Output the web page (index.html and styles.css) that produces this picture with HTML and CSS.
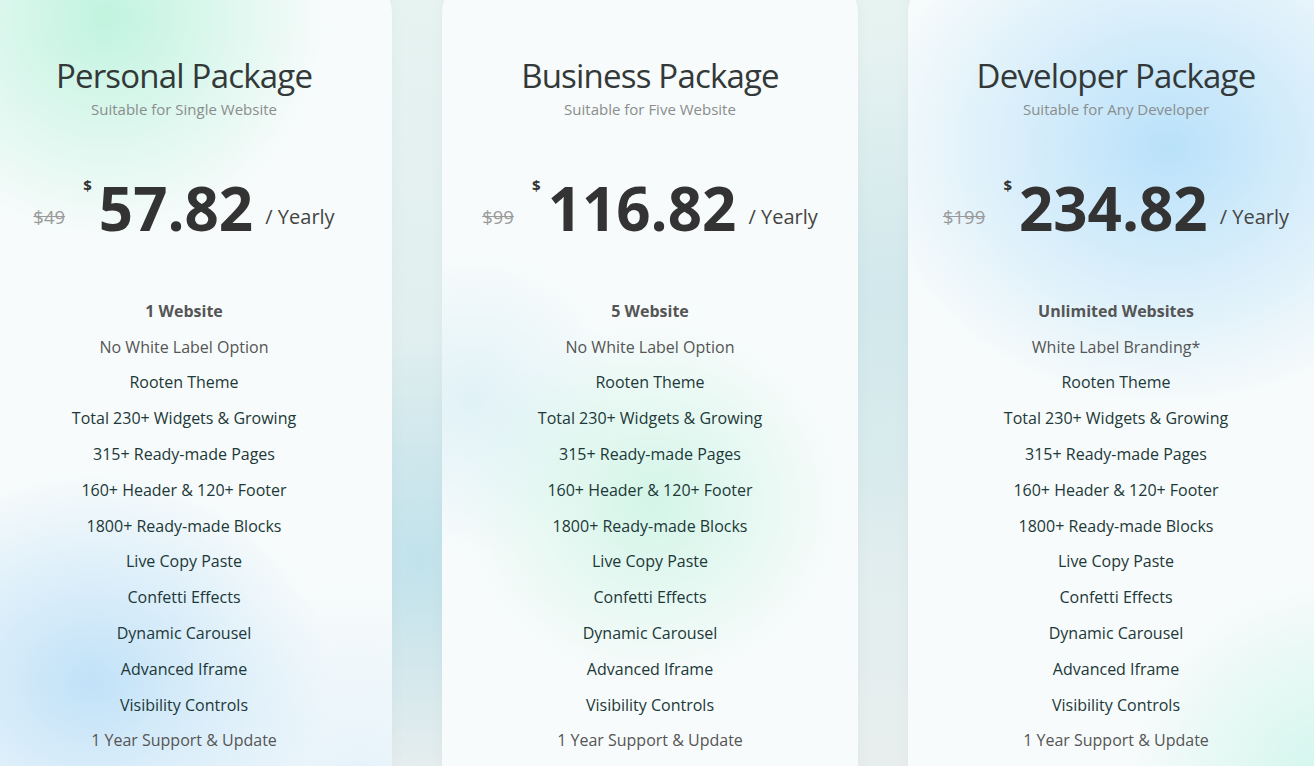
FILE: index.html
```html
<!DOCTYPE html>
<html lang="en">
<head>
    <meta charset="UTF-8">
    <meta name="viewport" content="width=device-width, initial-scale=1.0">
    <title>Pricing</title>
    <link rel="stylesheet" href="styles.css">
</head>
<body>
    <div class="pricing">
        <div class="card card-personal">
            <div class="card-head">
                <h2 class="title">Personal Package</h2>
                <p class="subtitle">Suitable for Single Website</p>
            </div>
            <div class="price">
                <span class="old">$49</span>
                <span class="amount"><sup>$</sup>57.82</span>
                <span class="period">/ Yearly</span>
            </div>
            <ul class="features">
                <li class="strong">1 Website</li>
                <li class="muted">No White Label Option</li>
                <li>Rooten Theme</li>
                <li>Total 230+ Widgets &amp; Growing</li>
                <li>315+ Ready-made Pages</li>
                <li>160+ Header &amp; 120+ Footer</li>
                <li>1800+ Ready-made Blocks</li>
                <li>Live Copy Paste</li>
                <li>Confetti Effects</li>
                <li>Dynamic Carousel</li>
                <li>Advanced Iframe</li>
                <li>Visibility Controls</li>
                <li class="muted">1 Year Support &amp; Update</li>
            </ul>
        </div>

        <div class="card card-business">
            <div class="card-head">
                <h2 class="title">Business Package</h2>
                <p class="subtitle">Suitable for Five Website</p>
            </div>
            <div class="price">
                <span class="old">$99</span>
                <span class="amount"><sup>$</sup>116.82</span>
                <span class="period">/ Yearly</span>
            </div>
            <ul class="features">
                <li class="strong">5 Website</li>
                <li class="muted">No White Label Option</li>
                <li>Rooten Theme</li>
                <li>Total 230+ Widgets &amp; Growing</li>
                <li>315+ Ready-made Pages</li>
                <li>160+ Header &amp; 120+ Footer</li>
                <li>1800+ Ready-made Blocks</li>
                <li>Live Copy Paste</li>
                <li>Confetti Effects</li>
                <li>Dynamic Carousel</li>
                <li>Advanced Iframe</li>
                <li>Visibility Controls</li>
                <li class="muted">1 Year Support &amp; Update</li>
            </ul>
        </div>

        <div class="card card-developer">
            <div class="card-head">
                <h2 class="title">Developer Package</h2>
                <p class="subtitle">Suitable for Any Developer</p>
            </div>
            <div class="price">
                <span class="old">$199</span>
                <span class="amount"><sup>$</sup>234.82</span>
                <span class="period">/ Yearly</span>
            </div>
            <ul class="features">
                <li class="strong">Unlimited Websites</li>
                <li class="muted">White Label Branding*</li>
                <li>Rooten Theme</li>
                <li>Total 230+ Widgets &amp; Growing</li>
                <li>315+ Ready-made Pages</li>
                <li>160+ Header &amp; 120+ Footer</li>
                <li>1800+ Ready-made Blocks</li>
                <li>Live Copy Paste</li>
                <li>Confetti Effects</li>
                <li>Dynamic Carousel</li>
                <li>Advanced Iframe</li>
                <li>Visibility Controls</li>
                <li class="muted">1 Year Support &amp; Update</li>
            </ul>
        </div>
    </div>
</body>
</html>
```

FILE: styles.css
```css
body {
    margin: 0;
    height: 100vh;
    overflow: hidden;
    font-family: "Open Sans", "Noto Sans", sans-serif;
    background-color: #e2eeee;
    background-image:
        radial-gradient(circle at 420px 560px, rgba(190, 225, 235, 0.9), rgba(190, 225, 235, 0) 220px),
        radial-gradient(circle at 880px 300px, rgba(205, 230, 235, 0.8), rgba(205, 230, 235, 0) 260px),
        linear-gradient(180deg, #e7f3f1 0%, #deedee 60%, #e8eeee 100%);
}

.pricing {
    display: flex;
    gap: 50px;
    margin-left: -24px;
    margin-top: -18px;
}

.card {
    flex: 0 0 416px;
    height: 820px;
    box-sizing: border-box;
    padding-top: 73px;
    border-radius: 30px;
    background-color: #f7fbfb;
    box-shadow: 0 0 16px rgba(0, 0, 0, 0.035);
    text-align: center;
}

.card-personal {
    background-image:
        radial-gradient(circle at 130px 35px, rgba(190, 243, 222, 0.95), rgba(190, 243, 222, 0) 220px),
        radial-gradient(ellipse 240px 210px at 115px 700px, rgba(190, 224, 248, 0.95), rgba(190, 224, 248, 0) 100%),
        radial-gradient(circle at 380px 800px, rgba(225, 240, 250, 0.8), rgba(225, 240, 250, 0) 200px);
}

.card-business {
    background-image:
        radial-gradient(ellipse 190px 180px at 210px 520px, rgba(205, 244, 228, 0.85), rgba(205, 244, 228, 0) 100%),
        radial-gradient(circle at 30px 420px, rgba(215, 238, 245, 0.7), rgba(215, 238, 245, 0) 150px);
}

.card-developer {
    background-image:
        radial-gradient(ellipse 300px 260px at 260px 165px, rgba(185, 225, 250, 1), rgba(185, 225, 250, 0) 100%),
        radial-gradient(circle at 420px 800px, rgba(205, 245, 235, 0.9), rgba(205, 245, 235, 0) 200px);
}

.title {
    margin: 0;
    font-size: 33px;
    font-weight: 400;
    letter-spacing: -0.8px;
    line-height: 1.3;
    color: #333838;
}

.subtitle {
    margin: 1px 0 0;
    font-size: 15px;
    color: #8a8d8d;
}

.price {
    margin-top: 49px;
    height: 80px;
    line-height: 80px;
    white-space: nowrap;
}

.old {
    font-size: 18.5px;
    line-height: 1;
    color: #9a9a9a;
    text-decoration: line-through;
    vertical-align: 7px;
    margin-right: 14px;
}

.amount {
    font-size: 60px;
    font-weight: 700;
    color: #333;
}

.amount sup {
    font-size: 15px;
    line-height: 1;
    vertical-align: 40px;
    margin-right: 7px;
}

.period {
    font-size: 20px;
    line-height: 1;
    color: #444;
    vertical-align: 7px;
    margin-left: 8px;
}

.features {
    list-style: none;
    margin: 46px 0 0;
    padding: 0;
}

.features li {
    font-size: 16px;
    line-height: 35.8px;
    color: #1c3838;
}

.features .strong {
    font-weight: 700;
    color: #555;
}

.features .muted {
    color: #555;
}
```
